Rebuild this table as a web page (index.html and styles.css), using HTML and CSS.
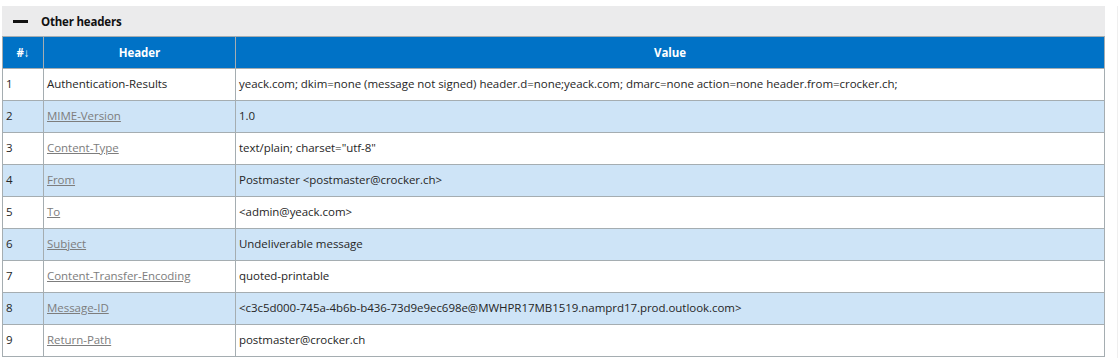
FILE: index.html
```html
<!DOCTYPE html>
<html>
<head>
<meta charset="utf-8">
<link rel="stylesheet" href="styles.css">
</head>
<body>
<div class="page">
  <div class="panel">
    <div class="section-bar">
      <span class="collapse-icon"></span>
      <span class="section-title">Other headers</span>
    </div>
    <table class="hdr-table">
      <colgroup>
        <col class="c-num">
        <col class="c-name">
        <col class="c-val">
      </colgroup>
      <thead>
        <tr><th>#↓</th><th>Header</th><th>Value</th></tr>
      </thead>
      <tbody>
        <tr><td>1</td><td class="plain">Authentication-Results</td><td>yeack.com; dkim=none (message not signed) header.d=none;yeack.com; dmarc=none action=none header.from=crocker.ch;</td></tr>
        <tr class="alt"><td>2</td><td><a href="#" class="lnk">MIME-Version</a></td><td>1.0</td></tr>
        <tr><td>3</td><td><a href="#" class="lnk">Content-Type</a></td><td>text/plain; charset="utf-8"</td></tr>
        <tr class="alt"><td>4</td><td><a href="#" class="lnk">From</a></td><td>Postmaster &lt;postmaster@crocker.ch&gt;</td></tr>
        <tr><td>5</td><td><a href="#" class="lnk">To</a></td><td>&lt;admin@yeack.com&gt;</td></tr>
        <tr class="alt"><td>6</td><td><a href="#" class="lnk">Subject</a></td><td>Undeliverable message</td></tr>
        <tr><td>7</td><td><a href="#" class="lnk">Content-Transfer-Encoding</a></td><td>quoted-printable</td></tr>
        <tr class="alt"><td>8</td><td><a href="#" class="lnk">Message-ID</a></td><td>&lt;c3c5d000-745a-4b6b-b436-73d9e9ec698e@MWHPR17MB1519.namprd17.prod.outlook.com&gt;</td></tr>
        <tr><td>9</td><td><a href="#" class="lnk">Return-Path</a></td><td>postmaster@crocker.ch</td></tr>
      </tbody>
    </table>
  </div>
  <div class="gutter"></div>
</div>
</body>
</html>
```
FILE: styles.css
```css
html, body {
  margin: 0;
  padding: 0;
  background: #ffffff;
}
body {
  font-family: "Open Sans", "Noto Sans", sans-serif;
  font-size: 11.5px;
  color: #262626;
}
.page {
  display: flex;
  padding: 6px 0 0 2px;
  height: 352px;
  overflow: hidden;
}
.panel {
  width: 1103px;
  flex: none;
}
.gutter {
  flex: 1;
  border-right: 1px solid #efefef;
}
.section-bar {
  display: flex;
  align-items: center;
  height: 30px;
  background: #ebebec;
  padding-left: 11px;
}
.collapse-icon {
  width: 15px;
  height: 3px;
  background: #111;
  margin-right: 13px;
}
.section-title {
  font-weight: 700;
  color: #111;
  font-size: 11.5px;
  letter-spacing: -0.2px;
}
.hdr-table {
  width: 1103px;
  border-collapse: collapse;
  table-layout: fixed;
}
.c-num { width: 41px; }
.c-name { width: 192px; }
.hdr-table th, .hdr-table td {
  border: 1px solid #a5adb1;
  height: 32px;
  padding: 0 3px 3px;
  box-sizing: border-box;
  white-space: nowrap;
  text-align: left;
  letter-spacing: -0.04px;
}
.hdr-table th {
  background: #0072c6;
  color: #ffffff;
  font-weight: 700;
  text-align: center;
  padding-bottom: 1px;
}
.hdr-table tbody tr.alt td {
  background: #cee4f7;
}
.lnk {
  color: #7d7d7d;
  text-decoration: underline;
}
```
